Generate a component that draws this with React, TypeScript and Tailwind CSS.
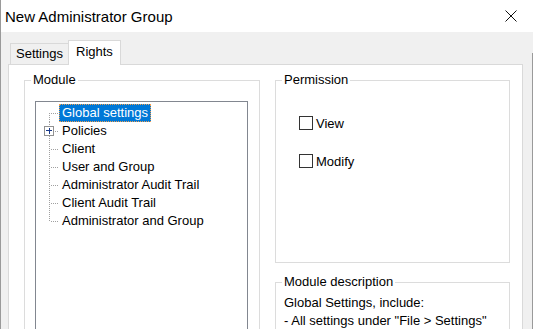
import React from "react";

const FONT = { fontFamily: '"Liberation Sans", Arial, sans-serif' };

function TreeLines({ kind, plus }: { kind: "first" | "mid" | "last"; plus?: boolean }) {
  const dots: React.ReactNode[] = [];
  const x = 13;
  const cy = 9;
  const y0 = kind === "first" ? cy : 0;
  const y1 = kind === "last" ? cy : 18;
  for (let y = y0; y <= y1; y += 2) {
    if (y < 18) dots.push(<rect key={"v" + y} x={x} y={y} width={1} height={1} fill="#a0a0a0" />);
  }
  for (let xx = x + 2; xx <= 22; xx += 2) {
    dots.push(<rect key={"h" + xx} x={xx} y={cy} width={1} height={1} fill="#a0a0a0" />);
  }
  return (
    <svg width="23" height="18" viewBox="0 0 23 18" shapeRendering="crispEdges" className="shrink-0 block">
      {dots}
      {plus && (
        <g>
          <rect x={8.5} y={4.5} width={9} height={9} fill="#ffffff" stroke="#919191" />
          <rect x={10} y={8} width={6} height={1} fill="#1a3a8a" />
          <rect x={12.5} y={5.5} width={1} height={6} fill="#1a3a8a" />
        </g>
      )}
    </svg>
  );
}

function TreeRow({
  label,
  kind,
  plus,
  selected,
}: {
  label: string;
  kind: "first" | "mid" | "last";
  plus?: boolean;
  selected?: boolean;
}) {
  return (
    <div className="flex h-[18px] items-stretch">
      <TreeLines kind={kind} plus={plus} />
      {selected ? (
        <div className="flex items-center bg-[#0078d7] text-white px-[2px] border border-dotted border-[#f0a050] leading-[16px] whitespace-nowrap">
          {label}
        </div>
      ) : (
        <div className="flex items-center px-[3px] leading-[18px] text-black whitespace-nowrap">{label}</div>
      )}
    </div>
  );
}

function Check({ label }: { label: string }) {
  return (
    <div className="flex items-center h-[16px]">
      <div className="w-[14px] h-[14px] border border-[#333333] bg-white shrink-0" />
      <span className="ml-[3px] leading-[16px] pt-[1px]">{label}</span>
    </div>
  );
}

export default function App() {
  const items = [
    "Global settings",
    "Policies",
    "Client",
    "User and Group",
    "Administrator Audit Trail",
    "Client Audit Trail",
    "Administrator and Group",
  ];
  return (
    <div
      className="w-[533px] h-[329px] overflow-hidden bg-[#f0f0f0] border-l border-[#9a9a9a] text-[13px] text-black flex flex-col"
      style={FONT}
    >
      {/* Title bar */}
      <div className="h-[32px] bg-white flex items-center shrink-0 pl-[4px] pr-[16px]">
        <span className="text-[15px] leading-[18px] pt-[1px]">New Administrator Group</span>
        <div className="flex-1" />
        <svg width="12" height="12" viewBox="0 0 12 12" className="block">
          <path d="M0.5 0.5 L11.5 11.5 M11.5 0.5 L0.5 11.5" stroke="#111" strokeWidth="1" />
        </svg>
      </div>

      {/* Body */}
      <div className="flex-1 flex">
        <div className="flex-1 flex flex-col pt-[8px]">
          {/* Tabs */}
          <div className="flex items-end ml-[9px] h-[24px] shrink-0 relative z-10">
            <div className="w-[58px] h-[21px] border-l border-t border-[#d9d9d9] bg-[#f0f0f0] pl-[5px] leading-[20px]">
              Settings
            </div>
            <div className="w-[53px] h-[25px] -mb-[1px] border-l border-t border-r border-[#d9d9d9] bg-white pl-[7px] leading-[20px] pt-[1px]">
              Rights
            </div>
          </div>

          {/* Tab panel */}
          <div className="ml-[7px] w-[515px] flex-1 border border-[#d9d9d9] bg-white flex pt-[7px]">
            {/* Module */}
            <fieldset className="ml-[15px] w-[236px] h-[400px] border border-[#dcdcdc] shrink-0">
              <legend className="ml-[6px] px-[2px] leading-[16px]">Module</legend>
              <div className="ml-[10px] mt-[13px] w-[213px] h-[400px] border border-[#828790] bg-white pt-[2px]">
                {items.map((it, i) => (
                  <TreeRow
                    key={it}
                    label={it}
                    kind={i === 0 ? "first" : i === items.length - 1 ? "last" : "mid"}
                    plus={i === 1}
                    selected={i === 0}
                  />
                ))}
              </div>
            </fieldset>

            <div className="ml-[15px] w-[235px] flex flex-col shrink-0">
              {/* Permission */}
              <fieldset className="h-[191px] border border-[#dcdcdc]">
                <legend className="ml-[6px] px-[2px] leading-[16px]">Permission</legend>
                <div className="ml-[23px] mt-[27px] flex flex-col gap-[22px]">
                  <Check label="View" />
                  <Check label="Modify" />
                </div>
              </fieldset>

              {/* Module description */}
              <fieldset className="mt-[11px] h-[200px] border border-[#dcdcdc]">
                <legend className="ml-[6px] px-[2px] leading-[16px]">Module description</legend>
                <div className="ml-[8px] mt-[4px] leading-[18px]">
                  <div>Global Settings, include:</div>
                  <div>- All settings under "File &gt; Settings"</div>
                </div>
              </fieldset>
            </div>
          </div>
        </div>
        <div className="w-[1px] mt-[21px] bg-[#9a9a9a] shrink-0" />
      </div>
    </div>
  );
}
